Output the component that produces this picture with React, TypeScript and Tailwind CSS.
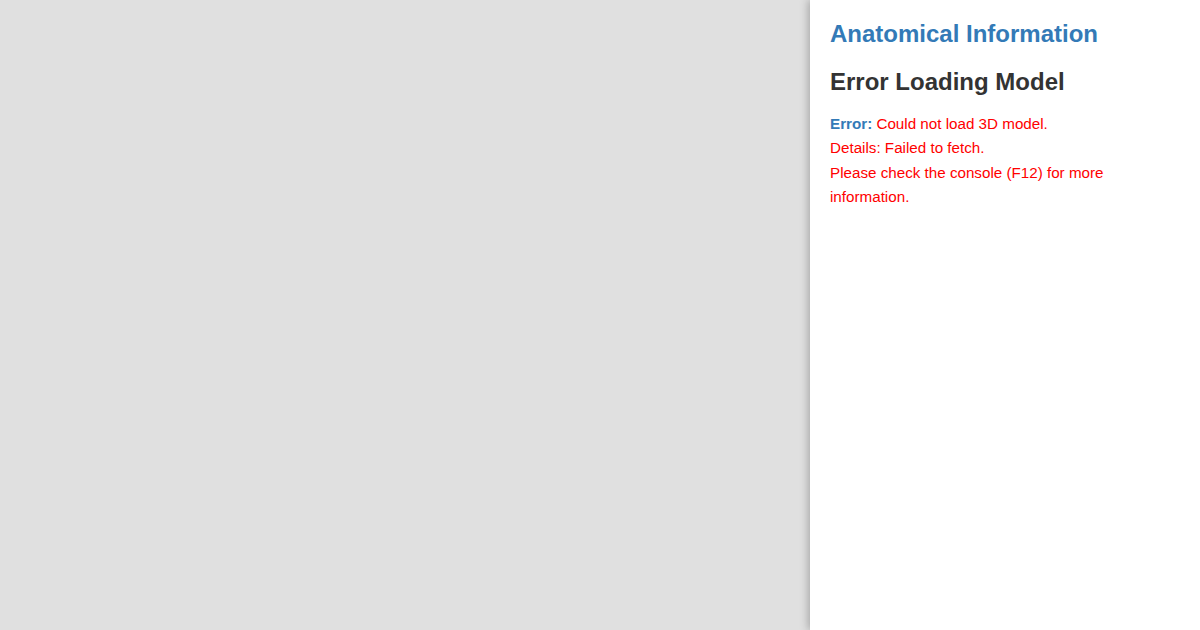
import React from 'react';

const App: React.FC = () => {
  return (
    <div className="flex w-[1200px] h-[630px] bg-[#e0e0e0] font-['Liberation_Sans',Arial,sans-serif] overflow-hidden">
      {/* viewer area (model failed to load) */}
      <div className="flex-1" />

      {/* info panel */}
      <div className="w-[390px] h-full bg-white px-5 pt-[19px] shadow-[-2px_0_8px_rgba(0,0,0,0.25)]">
        <h1 className="text-[24px] leading-[30px] font-bold text-[#337ab7]">Anatomical Information</h1>
        <h2 className="mt-[18px] text-[24px] leading-[30px] font-bold text-[#333333]">Error Loading Model</h2>
        <div className="mt-[15px] text-[15.2px] leading-[1.6] text-[#ff0000]">
          <p>
            <strong className="text-[#337ab7]">Error:</strong> Could not load 3D model.
          </p>
          <p>Details: Failed to fetch.</p>
          <p>Please check the console (F12) for more information.</p>
        </div>
      </div>
    </div>
  );
};

export default App;
